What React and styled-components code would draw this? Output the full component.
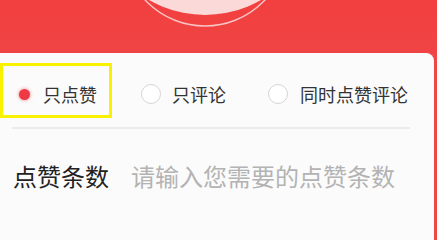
import React, { useState } from "react";
import styled, { createGlobalStyle } from "styled-components";

const Global = createGlobalStyle`
  html, body {
    margin: 0;
    padding: 0;
    height: 100%;
    background: #f04646;
  }
  body {
    font-family: "Noto Sans CJK SC", "Noto Sans", sans-serif;
  }
  #root {
    height: 100%;
  }
`;

const Page = styled.div`
  width: 100%;
  height: 100%;
  min-height: 209px;
  display: flex;
  flex-direction: column;
  overflow: hidden;
  background: #f04646;
`;

const Header = styled.div`
  height: 53px;
  flex: none;
  background: linear-gradient(180deg, #f23f3f 0%, #f04444 100%);
  svg {
    display: block;
  }
`;

const Card = styled.div`
  flex: 1;
  width: 434px;
  box-sizing: border-box;
  background: #fbfbfb;
  border-top-right-radius: 8px;
  padding: 29px 24px 0 12px;
`;

const Options = styled.div`
  display: flex;
  align-items: center;
  height: 24px;
`;

const Option = styled.label`
  position: relative;
  display: flex;
  align-items: center;
  gap: ${(p) => p.$gap}px;
  margin-left: ${(p) => p.$offset}px;
  font-size: 18px;
  line-height: 24px;
  color: #333;
  cursor: pointer;

  &::after {
    content: "";
    display: ${(p) => (p.$marked ? "block" : "none")};
    position: absolute;
    top: -19px;
    bottom: -12px;
    left: -14px;
    right: -15px;
    border: 3px solid #f8f200;
    pointer-events: none;
  }
`;

const Radio = styled.span`
  width: 20px;
  height: 20px;
  box-sizing: border-box;
  border-radius: 50%;
  display: flex;
  align-items: center;
  justify-content: center;
  border: ${(p) => (p.$on ? "none" : "1.5px solid #d6d6d6")};
  background: ${(p) => (p.$on ? "transparent" : "#fff")};

  &::before {
    content: "";
    display: ${(p) => (p.$on ? "block" : "none")};
    width: 11px;
    height: 11px;
    border-radius: 50%;
    background: #ee3a45;
    box-shadow: 0 0 3px 1px rgba(238, 58, 69, 0.35);
  }
`;

const Divider = styled.div`
  height: 2px;
  margin-top: 21px;
  background: #ebebeb;
`;

const Field = styled.div`
  display: flex;
  align-items: center;
  height: 34px;
  margin-top: 29px;
  padding-left: 1px;
`;

const FieldLabel = styled.span`
  font-size: 24px;
  color: #222;
  white-space: nowrap;
`;

const FieldInput = styled.input`
  flex: 1;
  min-width: 0;
  margin-left: 22px;
  border: none;
  outline: none;
  background: transparent;
  padding: 0;
  font-family: "Noto Sans CJK SC", "Noto Sans", sans-serif;
  font-size: 24px;
  color: #222;
  &::placeholder {
    color: #b3b3b3;
  }
`;

const choices = [
  { key: "like", text: "只点赞", offset: 2, gap: 9 },
  { key: "comment", text: "只评论", offset: 44, gap: 11 },
  { key: "both", text: "同时点赞评论", offset: 42, gap: 12 },
];

export default function App() {
  const [mode, setMode] = useState("like");
  return (
    <Page>
      <Global />
      <Header>
        <svg width="437" height="53" viewBox="0 0 437 53">
          <circle cx="205" cy="-97" r="112" fill="#fbd9d9" />
          <circle cx="205" cy="-56" r="82" fill="none" stroke="#f8c3c3" strokeWidth="1.5" />
        </svg>
      </Header>
      <Card>
        <Options>
          {choices.map((c) => (
            <Option
              key={c.key}
              $offset={c.offset}
              $gap={c.gap}
              $marked={c.key === "like"}
              onClick={() => setMode(c.key)}
            >
              <Radio $on={mode === c.key} />
              {c.text}
            </Option>
          ))}
        </Options>
        <Divider />
        <Field>
          <FieldLabel>点赞条数</FieldLabel>
          <FieldInput placeholder="请输入您需要的点赞条数" />
        </Field>
      </Card>
    </Page>
  );
}
